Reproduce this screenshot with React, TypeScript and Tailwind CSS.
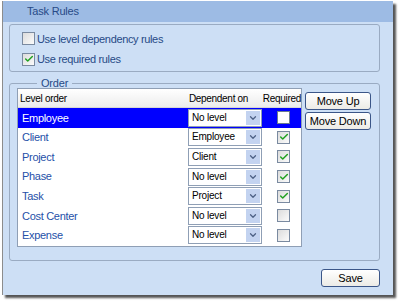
import { Check, ChevronDown } from 'lucide-react'

const rows = [
  { name: 'Employee', dep: 'No level', req: false },
  { name: 'Client', dep: 'Employee', req: true },
  { name: 'Project', dep: 'Client', req: true },
  { name: 'Phase', dep: 'No level', req: true },
  { name: 'Task', dep: 'Project', req: true },
  { name: 'Cost Center', dep: 'No level', req: false },
  { name: 'Expense', dep: 'No level', req: false },
]

function Box({ checked, white }: { checked: boolean; white?: boolean }) {
  return (
    <div
      className={`w-[13px] h-[13px] border flex items-center justify-center ${
        white ? 'border-[#6b7b8f] bg-white' : 'border-[#7a8aa0] bg-gradient-to-br from-[#dcdcdc] to-[#fbfbfb]'
      }`}
    >
      {checked && <Check className="w-[10px] h-[10px] text-[#21a121]" strokeWidth={3.5} />}
    </div>
  )
}

function Select({ value }: { value: string }) {
  return (
    <div className="w-[74px] h-[18px] border border-[#8f9fb5] bg-white flex items-center">
      <span className="flex-1 pl-[3px] text-[10px] tracking-[-0.2px] text-black leading-none">{value}</span>
      <div className="w-[14px] h-[14px] mr-[1px] bg-[#c3d3f0] flex items-center justify-center">
        <ChevronDown className="w-[10px] h-[10px] text-[#4d6185]" strokeWidth={3} />
      </div>
    </div>
  )
}

function Btn({ label, w }: { label: string; w: string }) {
  return (
    <button
      type="button"
      className={`${w} h-[18px] rounded-[3px] border border-[#3b5688] bg-gradient-to-b from-white to-[#ecebe6] text-[11px] tracking-[-0.2px] text-black leading-none whitespace-nowrap`}
    >
      {label}
    </button>
  )
}

export default function App() {
  return (
    <div className="w-[400px] h-[302px] bg-white font-['Liberation_Sans',Arial,sans-serif] pt-[1px] pl-[2px]">
      <div className="w-[391px] h-[294px] bg-[#cddff5] border-l border-[#8c8c8c] shadow-[3px_3px_2px_#555] flex flex-col">
        <div className="h-[21px] bg-[#9dbbe4] flex items-center pl-[24px] text-[11px] tracking-[-0.2px] text-[#274a86]">
          Task Rules
        </div>
        <div className="ml-[6px] mr-[13px] mt-[2px] h-[48px] border border-[#9aabc2] rounded-[3px] flex flex-col justify-center gap-[4px] pl-[12px] pt-[2px]">
          <label className="flex items-center gap-[2px] text-[11px] tracking-[-0.35px] text-[#274a86]">
            <Box checked={false} />
            Use level dependency rules
          </label>
          <label className="flex items-center gap-[2px] text-[11px] tracking-[-0.35px] text-[#274a86]">
            <Box checked={true} />
            Use required rules
          </label>
        </div>
        <fieldset className="ml-[6px] mr-[13px] mt-[5px] h-[184px] border border-[#9aabc2] rounded-[3px] pl-[7px] pt-0">
          <legend className="ml-[20px] px-[4px] text-[11px] tracking-[-0.2px] text-[#274a86] leading-[12px]">Order</legend>
          <div className="flex gap-[3px] mt-[-1px]">
            <div className="w-[285px] h-[159px] border border-[#8f9fb5] bg-white flex flex-col">
              <div className="h-[19px] flex items-center text-[10px] tracking-[-0.3px] text-black bg-gradient-to-b from-white to-[#ececec] border-b border-[#d6d6d6]">
                <span className="w-[171px] pl-[2px]">Level order</span>
                <span className="w-[74px]">Dependent on</span>
                <span>Required</span>
              </div>
              {rows.map((r, i) => (
                <div
                  key={r.name}
                  className={`h-[19.6px] flex items-center text-[11px] tracking-[-0.3px] ${
                    i === 0 ? 'bg-[#0000ff] text-white' : 'text-[#2550a8]'
                  }`}
                >
                  <span className="w-[170px] pl-[4px]">{r.name}</span>
                  <Select value={r.dep} />
                  <div className="ml-[15px]">
                    <Box checked={r.req} white={i === 0} />
                  </div>
                </div>
              ))}
            </div>
            <div className="flex flex-col gap-[2px] mt-[4px]">
              <Btn label="Move Up" w="w-[66px]" />
              <Btn label="Move Down" w="w-[66px]" />
            </div>
          </div>
        </fieldset>
        <div className="flex justify-end pr-[13px] mt-[8px]">
          <Btn label="Save" w="w-[59px]" />
        </div>
      </div>
    </div>
  )
}
